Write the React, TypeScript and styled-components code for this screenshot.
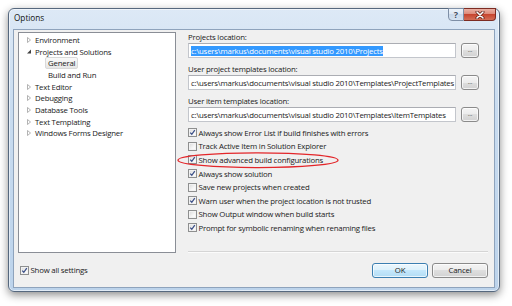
import * as React from "react";
import styled, { createGlobalStyle, css } from "styled-components";

const GlobalStyle = createGlobalStyle`
  body {
    margin: 0;
    background: #ffffff;
    font-family: "Open Sans", "Noto Sans", sans-serif;
    color: #1a1a1a;
  }
`;

const Page = styled.div`
  width: 512px;
  height: 306px;
  padding: 8px;
  box-sizing: border-box;
`;

const Window = styled.div`
  width: 492px;
  height: 284px;
  box-sizing: border-box;
  border: 1px solid #56687e;
  border-radius: 6px;
  padding: 0 4px 3px 4px;
  display: flex;
  flex-direction: column;
  background: linear-gradient(180deg, #dde9f6 0%, #c9dcf0 35%, #bcd3eb 100%);
  box-shadow: 0 3px 9px rgba(0, 0, 0, 0.45),
    inset 0 0 0 1px rgba(255, 255, 255, 0.55);
`;

const TitleBar = styled.div`
  height: 20px;
  display: flex;
  align-items: flex-start;
  flex: 0 0 auto;
`;

const Title = styled.span`
  font-size: 8.2px;
  line-height: 17px;
  padding-left: 1px;
  color: #111;
`;

const CaptionButtons = styled.div`
  margin-left: auto;
  margin-right: -1px;
  margin-top: -1px;
  display: flex;
`;

const CaptionButton = styled.div<{ $close?: boolean }>`
  height: 13px;
  box-sizing: border-box;
  display: flex;
  align-items: center;
  justify-content: center;
  ${(p) =>
    p.$close
      ? css`
          width: 32px;
          border: 1px solid #7c2b22;
          border-left: none;
          border-radius: 0 0 4px 0;
          background: linear-gradient(
            180deg,
            #eab0a3 0%,
            #dd8a79 45%,
            #c7452f 50%,
            #d46f57 100%
          );
        `
      : css`
          width: 16px;
          border: 1px solid #7e8fa6;
          border-radius: 0 0 0 4px;
          background: linear-gradient(
            180deg,
            #edf3fa 0%,
            #dde7f3 45%,
            #c9d8ea 50%,
            #d6e3f2 100%
          );
          font-size: 9px;
          font-weight: bold;
          color: #3f4d60;
          text-shadow: 0 0 2px #fff;
        `}
`;

const Content = styled.div`
  flex: 1;
  background: #f0f0f0;
  border: 1px solid #8ea3bc;
  padding: 2px 6px 0 4px;
  display: flex;
  flex-direction: column;
  font-size: 7.8px;
  letter-spacing: -0.2px;
`;

const TopSection = styled.div`
  height: 221px;
  display: flex;
  gap: 12px;
`;

const Tree = styled.div`
  width: 158px;
  box-sizing: border-box;
  border: 1px solid #8a8e96;
  background: #ffffff;
  padding-top: 1px;
`;

const TreeRow = styled.div<{ $indent: number }>`
  height: 11.7px;
  display: flex;
  align-items: center;
  padding-left: ${(p) => p.$indent}px;
`;

const Expander = styled.span`
  width: 4px;
  margin-right: 4px;
  display: flex;
  align-items: center;
`;

const TreeLabel = styled.span<{ $selected?: boolean }>`
  height: 100%;
  display: flex;
  align-items: center;
  padding: 0 3px;
  box-sizing: border-box;
  margin-left: ${(p) => (p.$selected !== undefined ? "0" : "-3px")};
  ${(p) =>
    p.$selected &&
    css`
      border: 1px solid #d9d9d9;
      border-radius: 2px;
      padding: 0 2px;
      background: linear-gradient(180deg, #fafafa 0%, #e6e6e6 100%);
    `}
`;

const RightColumn = styled.div`
  flex: 1;
  display: flex;
  flex-direction: column;
  margin-right: 1px;
`;

const FieldGroup = styled.div`
  margin-bottom: 6px;
`;

const FieldLabel = styled.div`
  height: 11px;
  line-height: 11px;
`;

const FieldRow = styled.div`
  display: flex;
  align-items: center;
  padding-right: 8px;
`;

const TextBox = styled.div`
  flex: 1;
  height: 15px;
  box-sizing: border-box;
  border: 1px solid #c3c6cc;
  border-top-color: #abadb3;
  background: #ffffff;
  padding-left: 2px;
  display: flex;
  align-items: center;
  white-space: nowrap;
  overflow: hidden;
`;

const Selected = styled.span`
  background: #3399ff;
  color: #ffffff;
  line-height: 10px;
`;

const Button = styled.div<{ $default?: boolean; $w: number }>`
  width: ${(p) => p.$w}px;
  height: 15px;
  box-sizing: border-box;
  border-radius: 3px;
  display: flex;
  align-items: center;
  justify-content: center;
  box-shadow: inset 0 0 0 1px rgba(255, 255, 255, 0.7);
  ${(p) =>
    p.$default
      ? css`
          border: 1px solid #3c7fb1;
          background: linear-gradient(
            180deg,
            #ecf7fd 0%,
            #dcf1fc 50%,
            #c4e7fb 50%,
            #b2dcf4 100%
          );
        `
      : css`
          border: 1px solid #8a8a8a;
          background: linear-gradient(
            180deg,
            #f4f4f4 0%,
            #ececec 50%,
            #dedede 50%,
            #d2d2d2 100%
          );
        `}
`;

const BrowseButton = styled(Button)`
  margin-left: 5px;
  font-size: 6px;
  letter-spacing: 0;
  padding-bottom: 2px;
`;

const CheckList = styled.div`
  margin-top: -2px;
`;

const CheckRow = styled.div`
  position: relative;
  height: 13.6px;
  display: flex;
  align-items: center;
  gap: 1.5px;
`;

const Box = styled.span`
  width: 9px;
  height: 9px;
  box-sizing: border-box;
  border: 1px solid #8e8f8f;
  background: linear-gradient(135deg, #d8d8d8 0%, #f6f6f6 60%, #ffffff 100%);
  box-shadow: inset 0 0 0 1px #f2f2f2;
  display: flex;
  flex: 0 0 auto;
`;

const Annotation = styled.svg`
  position: absolute;
  left: -12px;
  top: -2px;
  overflow: visible;
  pointer-events: none;
`;

const Separator = styled.div`
  margin-top: auto;
  margin-right: -1px;
  border-top: 1px solid #d5d5d5;
  border-bottom: 1px solid #fbfbfb;
`;

const BottomRow = styled.div`
  flex: 1;
  display: flex;
  align-items: center;
  gap: 4px;
  padding-left: 2px;
`;

const BottomCheck = styled.div`
  display: flex;
  align-items: center;
  gap: 1.5px;
  margin-right: auto;
`;

const CheckMark = () => (
  <svg width="7" height="7" viewBox="0 0 7 7">
    <path
      d="M1.2 3.6 L2.8 5.3 L5.8 1.2"
      fill="none"
      stroke="#3c5088"
      strokeWidth="1.3"
    />
  </svg>
);

const CheckBox = ({ checked }: { checked: boolean }) => (
  <Box>{checked && <CheckMark />}</Box>
);

const Collapsed = () => (
  <svg width="4" height="6" viewBox="0 0 4 6">
    <path d="M0.5 0.5 L3.5 3 L0.5 5.5 Z" fill="#fff" stroke="#a0a0a0" strokeWidth="0.8" />
  </svg>
);

const ExpandedIcon = () => (
  <svg width="4" height="5" viewBox="0 0 4 5">
    <path d="M4 0.5 L4 4.5 L0 4.5 Z" fill="#404040" />
  </svg>
);

interface ITreeItem {
  text: string;
  level: number;
  expander?: "open" | "closed";
  selected?: boolean;
}

const treeItems: ITreeItem[] = [
  { text: "Environment", level: 0, expander: "closed" },
  { text: "Projects and Solutions", level: 0, expander: "open" },
  { text: "General", level: 1, selected: true },
  { text: "Build and Run", level: 1, selected: false },
  { text: "Text Editor", level: 0, expander: "closed" },
  { text: "Debugging", level: 0, expander: "closed" },
  { text: "Database Tools", level: 0, expander: "closed" },
  { text: "Text Templating", level: 0, expander: "closed" },
  { text: "Windows Forms Designer", level: 0, expander: "closed" },
];

const fields = [
  {
    label: "Projects location:",
    value: "c:\\users\\markus\\documents\\visual studio 2010\\Projects",
    selected: true,
  },
  {
    label: "User project templates location:",
    value:
      "c:\\users\\markus\\documents\\visual studio 2010\\Templates\\ProjectTemplates",
  },
  {
    label: "User item templates location:",
    value:
      "c:\\users\\markus\\documents\\visual studio 2010\\Templates\\ItemTemplates",
  },
];

const checks = [
  { text: "Always show Error List if build finishes with errors", checked: true },
  { text: "Track Active Item in Solution Explorer", checked: false },
  { text: "Show advanced build configurations", checked: true, marked: true },
  { text: "Always show solution", checked: true },
  { text: "Save new projects when created", checked: false },
  { text: "Warn user when the project location is not trusted", checked: true },
  { text: "Show Output window when build starts", checked: false },
  { text: "Prompt for symbolic renaming when renaming files", checked: true },
];

const App: React.FunctionComponent = () => {
  return (
    <Page>
      <GlobalStyle />
      <Window>
        <TitleBar>
          <Title>Options</Title>
          <CaptionButtons>
            <CaptionButton>?</CaptionButton>
            <CaptionButton $close>
              <svg width="10" height="8" viewBox="0 0 10 8">
                <path
                  d="M2 1 L8 7 M8 1 L2 7"
                  stroke="#5a1a12"
                  strokeWidth="3"
                  strokeLinecap="round"
                />
                <path
                  d="M2 1 L8 7 M8 1 L2 7"
                  stroke="#ffffff"
                  strokeWidth="1.6"
                  strokeLinecap="round"
                />
              </svg>
            </CaptionButton>
          </CaptionButtons>
        </TitleBar>
        <Content>
          <TopSection>
            <Tree>
              {treeItems.map((item) => (
                <TreeRow key={item.text} $indent={item.level === 0 ? 8 : 26}>
                  {item.expander && (
                    <Expander>
                      {item.expander === "open" ? <ExpandedIcon /> : <Collapsed />}
                    </Expander>
                  )}
                  <TreeLabel $selected={item.selected}>{item.text}</TreeLabel>
                </TreeRow>
              ))}
            </Tree>
            <RightColumn>
              {fields.map((f) => (
                <FieldGroup key={f.label}>
                  <FieldLabel>{f.label}</FieldLabel>
                  <FieldRow>
                    <TextBox>
                      {f.selected ? <Selected>{f.value}</Selected> : f.value}
                    </TextBox>
                    <BrowseButton $w={18}>...</BrowseButton>
                  </FieldRow>
                </FieldGroup>
              ))}
              <CheckList>
                {checks.map((c) => (
                  <CheckRow key={c.text}>
                    <CheckBox checked={c.checked} />
                    <span>{c.text}</span>
                    {c.marked && (
                      <Annotation width="164" height="19" viewBox="0 0 164 19">
                        <ellipse
                          cx="82"
                          cy="9.2"
                          rx="80"
                          ry="7.4"
                          fill="none"
                          stroke="#e3262a"
                          strokeWidth="1.3"
                        />
                      </Annotation>
                    )}
                  </CheckRow>
                ))}
              </CheckList>
              <Separator />
            </RightColumn>
          </TopSection>
          <BottomRow>
            <BottomCheck>
              <CheckBox checked />
              <span>Show all settings</span>
            </BottomCheck>
            <Button $default $w={56}>
              OK
            </Button>
            <Button $w={56}>Cancel</Button>
          </BottomRow>
        </Content>
      </Window>
    </Page>
  );
};

export default App;
